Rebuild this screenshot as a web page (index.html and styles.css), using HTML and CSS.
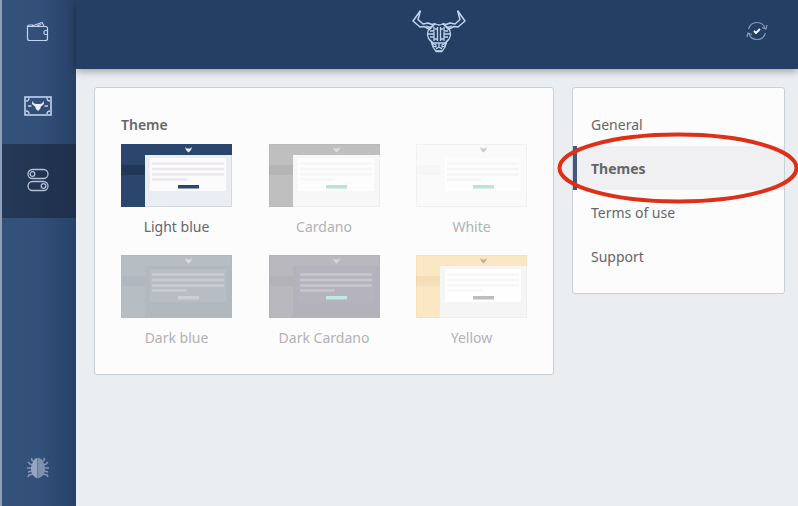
FILE: index.html
```html
<!DOCTYPE html>
<html lang="en">
<head>
<meta charset="utf-8">
<meta name="viewport" content="width=device-width, initial-scale=1">
<title>Settings</title>
<link rel="stylesheet" href="styles.css">
</head>
<body>
<svg class="sprite" aria-hidden="true">
  <symbol id="preview" viewBox="0 0 111 63">
    <rect class="p-body" width="111" height="63"/>
    <rect class="p-bar" width="111" height="11"/>
    <rect class="p-side" y="11" width="24" height="52"/>
    <rect class="p-active" y="21" width="24" height="10"/>
    <rect class="p-card" x="29" y="14" width="76" height="33"/>
    <path class="p-line" d="M31 19.500h72M31 25h72M31 30.500h72M31 35.500h35"/>
    <rect class="p-button" x="57" y="41" width="21" height="3.500"/>
    <path class="p-logo" d="M64 3l2 1.500h3L71 3l-1 3-2.500 2.500L65 6z"/>
    <rect class="p-frame" x=".5" y=".5" width="110" height="62"/>
  </symbol>
</svg>
<div class="app">
  <nav class="sidebar" aria-label="Main">
    <div class="sidebar-top">
      <button class="side-item" aria-label="Wallets">
        <svg width="24" height="22" viewBox="0 0 24 22" fill="none" stroke="#c3d3ee" stroke-width="1.200">
          <path d="M1.500 5.500h18q2 0 2 2v10q0 2-2 2h-16q-2 0-2-2zM1.500 5.500q0-1.500 2-1.500H7M6 5l10-3.500 2 3.500M11 5l4-1.500"/>
          <path d="M21.500 9.500h-2q-1.500 0-1.500 1.500v1q0 1.500 1.500 1.500h2"/>
        </svg>
      </button>
      <button class="side-item" aria-label="Redemption">
        <svg width="28" height="20" viewBox="0 0 28 20" fill="none" stroke="#c3d3ee">
          <rect x="1" y="1" width="26" height="18" stroke-width="1.600"/>
          <path d="M2 5q3 0 3-3M26 5q-3 0-3-3M2 15q3 0 3 3M26 15q-3 0-3 3" stroke-width="1.300"/>
          <path d="M4 10h3.500M20.500 10H24" stroke-width="1.500"/>
          <path d="M8.500 5l1.500 2.500 2.500.5h3l2.500-.5L19.500 5l.5 3-3 2.500-1 2.500-2 2-2-2-1-2.500L8 8z" fill="#e8f0ff" stroke="none"/>
        </svg>
      </button>
      <button class="side-item active" aria-label="Settings">
        <svg width="22" height="24" viewBox="0 0 22 24" fill="none" stroke="#b4c0d6" stroke-width="1.300">
          <rect x="1" y="1.500" width="20" height="9" rx="4.500"/><circle cx="5.500" cy="6" r="2.300"/>
          <rect x="1" y="13.500" width="20" height="9" rx="4.500"/><circle cx="16.500" cy="18" r="2.300"/>
        </svg>
      </button>
    </div>
    <button class="side-item bug" aria-label="Report a bug">
      <svg width="24" height="24" viewBox="0 0 24 24" fill="none" stroke="#8497b2" stroke-width="1.600">
        <path d="M8 6L6 4 5.500 2M16 6l2-2 .5-2M7 9L4 8 2 6M17 9l3-1 2-2M6 12H1M18 12h5M6 15l-4 1M18 15l4 1M7 18l-4 1-1 2M17 18l4 1 1 2"/>
        <path d="M11.500 2Q8 2 7.500 5.500 5 8 5 13q0 7 6.500 9.500z" fill="#94a6bf" stroke="none"/>
        <path d="M12 2q4 0 4.500 3.500Q19 8 19 13q0 7-7 9.500z" fill="#7d90ac" stroke="none"/>
      </svg>
    </button>
  </nav>
  <div class="page">
    <header class="topbar">
      <svg class="logo" role="img" aria-label="Daedalus" width="54" height="44" viewBox="0 0 54 44" fill="none" stroke="#bfd4ec" stroke-width="1.300" stroke-linejoin="round">
        <path stroke-width="1.500" d="M8.500 1.500L1 12l7 6 4-.5 4 2 2-1M8.500 1.500L6 10.500l5 4.500 5-1 4 1.500 3.500-1M45.500 1.500L53 12l-7 6-4-.5-4 2-2-1M45.500 1.500L48 10.500 43 15l-5-1-4 1.500-3.500-1"/>
        <path d="M14 17l5 1.500 3-2M40 17l-5 1.500-3-2"/>
        <path d="M23.500 15q3.500 2 7 0l5 3q3 3 3 8-.5 4-4 7l-1.500 5-3 4.500h-6l-3-4.500-1.500-5q-3.500-3-4-7 0-5 3-8z"/>
        <path d="M25.500 18v14M28.500 18v14M22 18v4h-4M20 18l-3 3M32 18v4h4M34 18l3 3M16 25h6v-2M38 25h-6v-2M18 28h4v4M36 28h-4v4M22 25v3M32 25v3M25 20h-2M29 20h2M25 30h-3M29 30h3M17 30l4 4h12l4-4"/>
        <path d="M20 34l4 2v2l-3-1zM34 34l-4 2v2l3-1zM27 34v4M24 40l3-2 3 2M24 42h6"/>
      </svg>
      <svg class="sync" role="img" aria-label="Synced" width="22" height="20" viewBox="0 0 22 20" fill="none" stroke="#829bbd" stroke-width="1.200">
        <path d="M2.500 8Q4.500 1.500 11 1.500q6 0 8 5.500M19.500 12q-2 6.500-8.500 6.500-6 0-8-5.500"/>
        <path d="M21 4l-1 4-4-1.500M1 16l1-4 4 1.500"/>
        <path d="M8 10l2 2 4-4" stroke="#fff" stroke-width="1.800"/>
      </svg>
    </header>
    <main class="content">
      <section class="panel themes">
        <h1>Theme</h1>
        <div class="theme-grid">
          <button class="theme light-blue selected"><svg class="thumb"><use href="#preview"/></svg><span>Light blue</span></button>
          <button class="theme cardano"><svg class="thumb"><use href="#preview"/></svg><span>Cardano</span></button>
          <button class="theme white"><svg class="thumb"><use href="#preview"/></svg><span>White</span></button>
          <button class="theme dark-blue"><svg class="thumb"><use href="#preview"/></svg><span>Dark blue</span></button>
          <button class="theme dark-cardano"><svg class="thumb"><use href="#preview"/></svg><span>Dark Cardano</span></button>
          <button class="theme yellow"><svg class="thumb"><use href="#preview"/></svg><span>Yellow</span></button>
        </div>
      </section>
      <nav class="panel menu" aria-label="Settings">
        <a href="#general">General</a>
        <a href="#themes" class="current" aria-current="page">Themes
          <svg class="highlight" aria-hidden="true" width="242" height="72" viewBox="0 0 242 72" fill="none"><ellipse cx="121" cy="36" rx="118.500" ry="33.500" stroke="#de2f17" stroke-width="4"/></svg>
        </a>
        <a href="#terms">Terms of use</a>
        <a href="#support">Support</a>
      </nav>
    </main>
  </div>
</div>
</body>
</html>
```

FILE: styles.css
```css
* { box-sizing: border-box; }

body {
  margin: 0;
  background: #ebeef1;
  color: #656669;
  font: 14px/20px "Noto Sans", sans-serif;
  overflow-x: hidden;
}

button {
  padding: 0;
  border: 0;
  background: none;
  color: inherit;
  font: inherit;
  cursor: pointer;
}

svg { display: block; }

.sprite { position: absolute; width: 0; height: 0; }

.app { display: flex; min-height: 100vh; }

.sidebar {
  display: flex;
  flex: 0 0 76px;
  flex-direction: column;
  justify-content: space-between;
  border-left: 2px solid #8fa0b8;
  background: linear-gradient(90deg, #345379, #32507a 50%, #284267);
}

.sidebar-top { margin-top: -4px; }

.side-item {
  display: flex;
  width: 100%;
  height: 74px;
  align-items: center;
  justify-content: center;
  padding: 0 2px 2px 0;
}

.side-item.active { background: linear-gradient(90deg, #253a58, #1e2f49); }

.page { flex: 1; min-width: 0; }

.topbar {
  position: relative;
  display: grid;
  grid-template-columns: 1fr auto 1fr;
  align-items: center;
  height: 69px;
  padding: 0 30px 7px 34px;
  background: #253f64;
  box-shadow: 0 2px 8px rgba(0, 0, 0, .35);
}

.logo { grid-column: 2; }
.sync { justify-self: end; }

.content {
  display: flex;
  align-items: flex-start;
  gap: 18px;
  padding: 18px 13px 18px 18px;
}

.panel {
  border: 1px solid #c8d0d8;
  border-radius: 3px;
  background: #fcfcfd;
}

.themes { flex: 1; padding: 27px 26px 24px; }

h1 {
  margin: 0 0 9px;
  font-size: 14px;
  font-weight: 600;
  line-height: 20px;
}

.theme-grid {
  display: grid;
  grid-template-columns: repeat(3, 111px);
  justify-content: space-between;
  gap: 16px;
}

.theme { color: #b1b2b4; line-height: 24px; white-space: nowrap; }
.theme.selected { color: #656669; }

.thumb { width: 111px; height: 63px; margin-bottom: 8px; }

.p-body { fill: var(--body); }
.p-bar, .p-side { fill: var(--bar); }
.p-active { fill: var(--active); }
.p-card { fill: var(--card); }
.p-line { stroke: var(--line); stroke-width: 2.5; }
.p-button { fill: var(--button); }
.p-logo { fill: var(--logo); }
.p-frame { fill: none; stroke: var(--frame); }

.light-blue { --body: #eaedf1; --bar: #2b466d; --active: #223858; --card: #fbfbfc; --line: #ebe9ed; --button: #2b466d; --logo: #e3edf8; --frame: rgba(43, 70, 109, .12); }
.cardano { --body: #f7f7f7; --bar: #bfbfbf; --active: #b5b5b5; --card: #fdfdfd; --line: #f6f6f6; --button: #b9e3d8; --logo: #dedede; --frame: rgba(0, 0, 0, .03); }
.white { --body: #fafafa; --bar: #fafafa; --active: #f6f6f6; --card: #fdfdfd; --line: #f5f5f5; --button: #bbe3da; --logo: #cccccc; --frame: #f1f1f1; }
.dark-blue { --body: #b2b9be; --bar: #b6bdc3; --active: #b0b7be; --card: #b6bdc4; --line: #c7cdd3; --button: #cbd0d5; --logo: #d9dde0; --frame: #b0b9bd; }
.dark-cardano { --body: #b3b2bb; --bar: #b9b8be; --active: #b3b2b9; --card: #b4b3be; --line: #c8c7ce; --button: #bfe7e6; --logo: #d5d5da; --frame: #b4b3ba; }
.yellow { --body: #f5f5f5; --bar: #fce7c4; --active: #f6deb9; --card: #fefefe; --line: #f7f7f7; --button: #bdbdbd; --logo: #bdb49d; --frame: rgba(160, 130, 80, .06); }

.menu { flex: 0 0 213px; padding: 14px 0 15px; }

.menu a {
  position: relative;
  display: block;
  padding: 13px 14px 11px;
  border-left: 4px solid transparent;
  color: inherit;
  text-decoration: none;
}

.menu .current {
  border-color: #43587b;
  background: #f0f0f3;
  font-weight: 700;
}

.highlight { position: absolute; top: -14px; left: -20px; }
```
